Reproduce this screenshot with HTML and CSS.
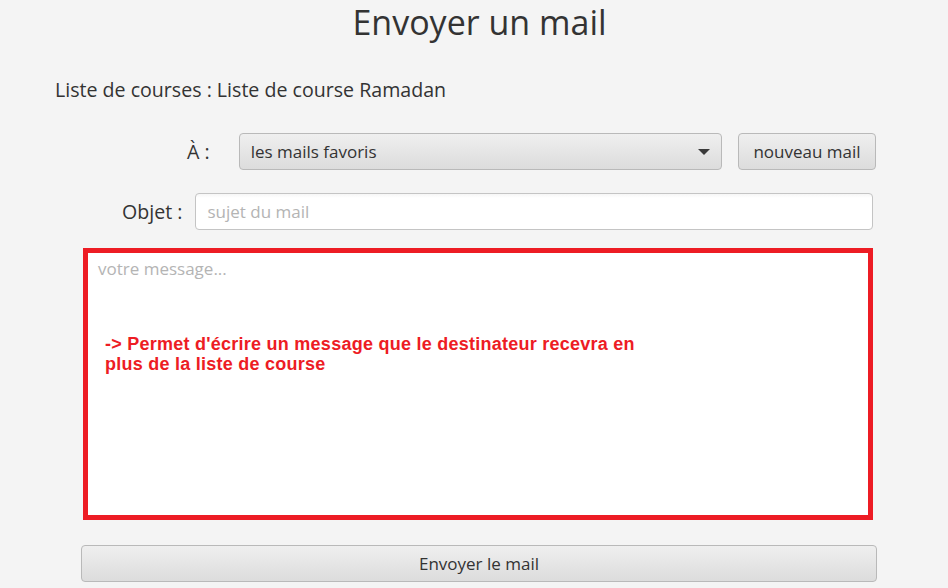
FILE: index.html
```html
<!DOCTYPE html>
<html lang="fr">
<head>
<meta charset="utf-8">
<title>Envoyer un mail</title>
<link rel="stylesheet" href="styles.css">
</head>
<body>
<div class="page">
  <h1 class="title">Envoyer un mail</h1>
  <div class="list-label">Liste de courses : Liste de course Ramadan</div>
  <div class="row row-to">
    <span class="label">À :</span>
    <div class="combo">
      <span class="combo-text">les mails favoris</span>
      <span class="arrow"></span>
    </div>
    <button class="btn btn-new">nouveau mail</button>
  </div>
  <div class="row row-subject">
    <span class="label">Objet :</span>
    <div class="field"><span class="placeholder">sujet du mail</span></div>
  </div>
  <div class="message">
    <div class="placeholder msg-ph">votre message...</div>
    <div class="note">-&gt; Permet d'écrire un message que le destinateur recevra en<br>plus de la liste de course</div>
  </div>
  <div class="send-row">
    <button class="btn btn-send">Envoyer le mail</button>
  </div>
</div>
</body>
</html>
```

FILE: styles.css
```css
html, body {
  margin: 0;
  padding: 0;
  background: #f4f4f4;
}
body {
  width: 948px;
  height: 588px;
  overflow: hidden;
  font-family: "Segoe UI", "Open Sans", sans-serif;
  color: #333333;
}
.page {
  padding: 0 70px 0 81px;
  display: flex;
  flex-direction: column;
}
.title {
  margin: 0;
  font-weight: 400;
  font-size: 34px;
  line-height: 44px;
  text-align: center;
  color: #333;
}
.list-label {
  margin: 32px 0 0 -26px;
  font-size: 19.6px;
  line-height: 28px;
}
.row {
  display: flex;
  align-items: center;
}
.row-to {
  margin-top: 29px;
  padding-left: 106px;
  padding-right: 2px;
}
.row-to .label {
  margin-right: 29px;
}
.label {
  font-size: 19.6px;
}
.combo {
  flex: 1;
  height: 37px;
  box-sizing: border-box;
  border: 1px solid #b9b9b9;
  border-radius: 4px;
  background: linear-gradient(#efefef, #dcdcdc);
  display: flex;
  align-items: center;
  padding: 0 11px 0 11px;
}
.combo-text {
  flex: 1;
  font-size: 17px;
  color: #333;
}
.arrow {
  width: 0;
  height: 0;
  border-left: 6px solid transparent;
  border-right: 6px solid transparent;
  border-top: 6px solid #3a3a3a;
}
.btn {
  font-family: "Segoe UI", "Open Sans", sans-serif;
  font-size: 17px;
  color: #333;
  height: 37px;
  box-sizing: border-box;
  border: 1px solid #b9b9b9;
  border-radius: 4px;
  background: linear-gradient(#efefef, #dcdcdc);
  padding: 0;
}
.btn-new {
  width: 138px;
  margin-left: 16px;
}
.row-subject {
  margin-top: 23px;
  padding-left: 41px;
  padding-right: 5px;
}
.row-subject .label {
  margin-right: 13px;
}
.field {
  flex: 1;
  height: 37px;
  box-sizing: border-box;
  border: 1px solid #c4c4c4;
  border-radius: 4px;
  background: linear-gradient(#f6f6f6, #ffffff 4px);
  display: flex;
  align-items: center;
  padding-left: 11px;
}
.placeholder {
  font-size: 17px;
  color: #b4b4b4;
}
.message {
  margin: 18px 5px 0 2px;
  height: 272px;
  box-sizing: border-box;
  border: 5px solid #ed1c24;
  background: #ffffff;
  padding: 4px 10px 0 10px;
}
.msg-ph {
  line-height: 24px;
}
.note {
  margin-top: 53px;
  margin-left: 7px;
  font-family: "Liberation Sans", Arial, sans-serif;
  font-weight: 700;
  font-size: 18px;
  letter-spacing: 0.25px;
  line-height: 20px;
  color: #ed1c24;
}
.send-row {
  display: flex;
  margin-top: 25px;
  padding-right: 1px;
}
.btn-send {
  flex: 1;
}
```
